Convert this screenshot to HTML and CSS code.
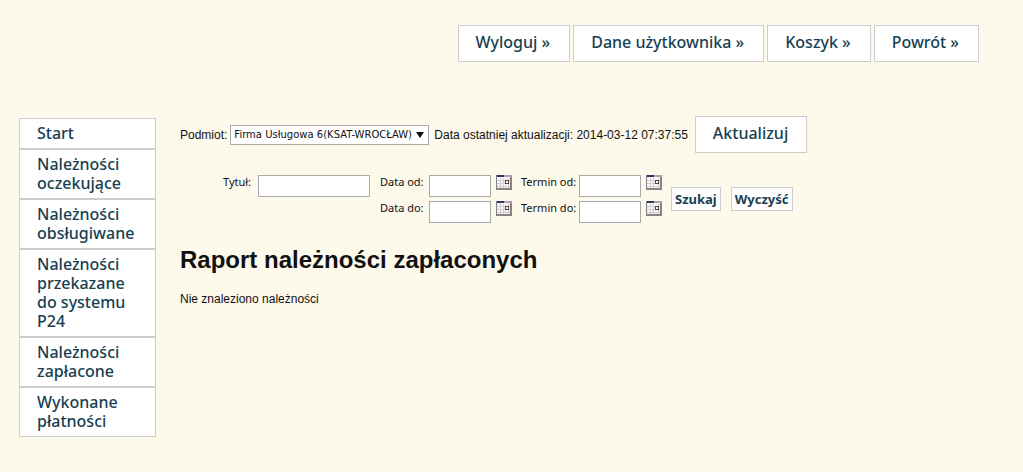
FILE: index.html
```html
<!DOCTYPE html>
<html lang="pl">
<head>
<meta charset="utf-8">
<title>Raport należności zapłaconych</title>
<link rel="stylesheet" href="styles.css">
</head>
<body>
<svg class="defs" aria-hidden="true">
  <symbol id="calendar" viewBox="0 0 16 15">
    <rect width="16" height="15" fill="#84808a"/>
    <rect x="1" y="1" width="14" height="13" fill="#f7f4f3"/>
    <rect x="1" y="0" width="7" height="2" fill="#34356c"/>
    <rect x="8" y="0" width="8" height="2" fill="#aaa3ae"/>
    <path d="M1 5.500H15M1 8.500H15M1 11.500H15M4.500 3V14M7.500 3V14M12.500 3V14" stroke="#d1ced5" fill="none"/>
    <rect x="9.500" y="5.500" width="3" height="3" fill="#fff" stroke="#514747"/>
    <path d="M15 2V14H1" stroke="#8f8082" stroke-width="2" fill="none"/>
  </symbol>
</svg>
<header class="top">
  <nav class="top-nav">
    <a class="box" href="#">Wyloguj »</a>
    <a class="box" href="#">Dane użytkownika »</a>
    <a class="box" href="#">Koszyk »</a>
    <a class="box" href="#">Powrót »</a>
  </nav>
</header>
<div class="page">
  <nav class="side">
    <a href="#">Start</a>
    <a href="#">Należności oczekujące</a>
    <a href="#">Należności obsługiwane</a>
    <a href="#">Należności przekazane do systemu P24</a>
    <a href="#">Należności zapłacone</a>
    <a href="#">Wykonane płatności</a>
  </nav>
  <main class="content">
    <form class="subject">
      <label for="podmiot">Podmiot:</label>
      <span class="select-wrap"><select id="podmiot"><option>Firma Usługowa 6(KSAT-WROCŁAW)</option></select></span>
      <span class="updated">Data ostatniej aktualizacji: 2014-03-12 07:37:55</span>
      <button class="box" type="button">Aktualizuj</button>
    </form>
    <form class="search">
      <div class="fields title-field">
        <label for="tytul">Tytuł:</label><input id="tytul" type="text">
      </div>
      <div class="fields date-fields">
        <label for="data-od">Data od:</label><input id="data-od" type="text"><button class="cal" type="button" aria-label="Wybierz datę od"><svg><use href="#calendar"/></svg></button>
        <label for="data-do">Data do:</label><input id="data-do" type="text"><button class="cal" type="button" aria-label="Wybierz datę do"><svg><use href="#calendar"/></svg></button>
      </div>
      <div class="fields date-fields term-fields">
        <label for="termin-od">Termin od:</label><input id="termin-od" type="text"><button class="cal" type="button" aria-label="Wybierz termin od"><svg><use href="#calendar"/></svg></button>
        <label for="termin-do">Termin do:</label><input id="termin-do" type="text"><button class="cal" type="button" aria-label="Wybierz termin do"><svg><use href="#calendar"/></svg></button>
      </div>
      <div class="actions">
        <button class="small" type="button">Szukaj</button>
        <button class="small" type="button">Wyczyść</button>
      </div>
    </form>
    <h1>Raport należności zapłaconych</h1>
    <p>Nie znaleziono należności</p>
  </main>
</div>
</body>
</html>
```
FILE: styles.css
```css
* { box-sizing: border-box; }
body {
  margin: 0;
  background: #fdf9eb;
  color: #111;
  font: 12px/16px "Liberation Sans", Arial, sans-serif;
}
.defs { display: none; }
.top { padding: 25px 44px 0 19px; }
.top-nav { display: flex; justify-content: flex-end; gap: 3px; }
.box, .side a {
  border: 1px solid #cdcdcd;
  background: #fff;
  color: #173f52;
  font: 500 16px/19px "Noto Sans", Verdana, sans-serif;
  text-decoration: none;
}
.box { padding: 7px 18px 9px 17px; white-space: nowrap; }
.top-nav .box { padding-right: 19px; }
.page { display: flex; gap: 24px; padding: 56px 44px 24px 19px; }
.side { flex: 0 0 137px; }
.side a { display: block; padding: 5px 16px 5px 17px; }
.content { flex: 1; min-width: 0; }
.subject { display: flex; align-items: center; margin-top: -2px; }
.select-wrap { position: relative; margin: 0 5px 0 3px; }
.select-wrap::after {
  content: "";
  position: absolute;
  right: 5px;
  top: 7px;
  border: 4px solid transparent;
  border-top: 6px solid #111;
  border-bottom: 0;
  pointer-events: none;
}
select {
  display: block;
  appearance: none;
  width: 199px;
  height: 20px;
  padding: 0 3px;
  border: 1px solid #aaa;
  border-radius: 0;
  background: #fff;
  color: #111;
  font: 10px/18px "DejaVu Sans", Tahoma, sans-serif;
}
.updated { margin-right: 7px; }
.search { display: flex; align-items: flex-start; margin-top: 22px; padding-left: 43px; }
.fields { display: grid; gap: 4px 5px; font: 11px/14px "Noto Sans", Tahoma, sans-serif; }
.title-field { grid-template-columns: 30px 112px; }
.date-fields { grid-template-columns: 44px 62px 16px; margin-left: 10px; }
.term-fields { grid-template-columns: 53px 62px 16px; margin-left: 9px; }
input { width: 100%; height: 22px; padding: 2px; border: 1px solid #aaa; background: #fff; }
.fields label { white-space: nowrap; }
.cal { width: 16px; height: 15px; padding: 0; border: 0; background: none; }
.cal svg { display: block; width: 16px; height: 15px; }
.actions { display: flex; gap: 10px; margin: 12px 0 0 9px; }
.small {
  padding: 2px 3px;
  border: 1px solid #cdcdcd;
  background: #fff;
  color: #173f52;
  font: bold 13px/18px "Noto Sans", Verdana, sans-serif;
}
h1 { margin: 21px 0 0; font-size: 24px; line-height: 32px; }
p { margin: 15px 0 0; }
```
